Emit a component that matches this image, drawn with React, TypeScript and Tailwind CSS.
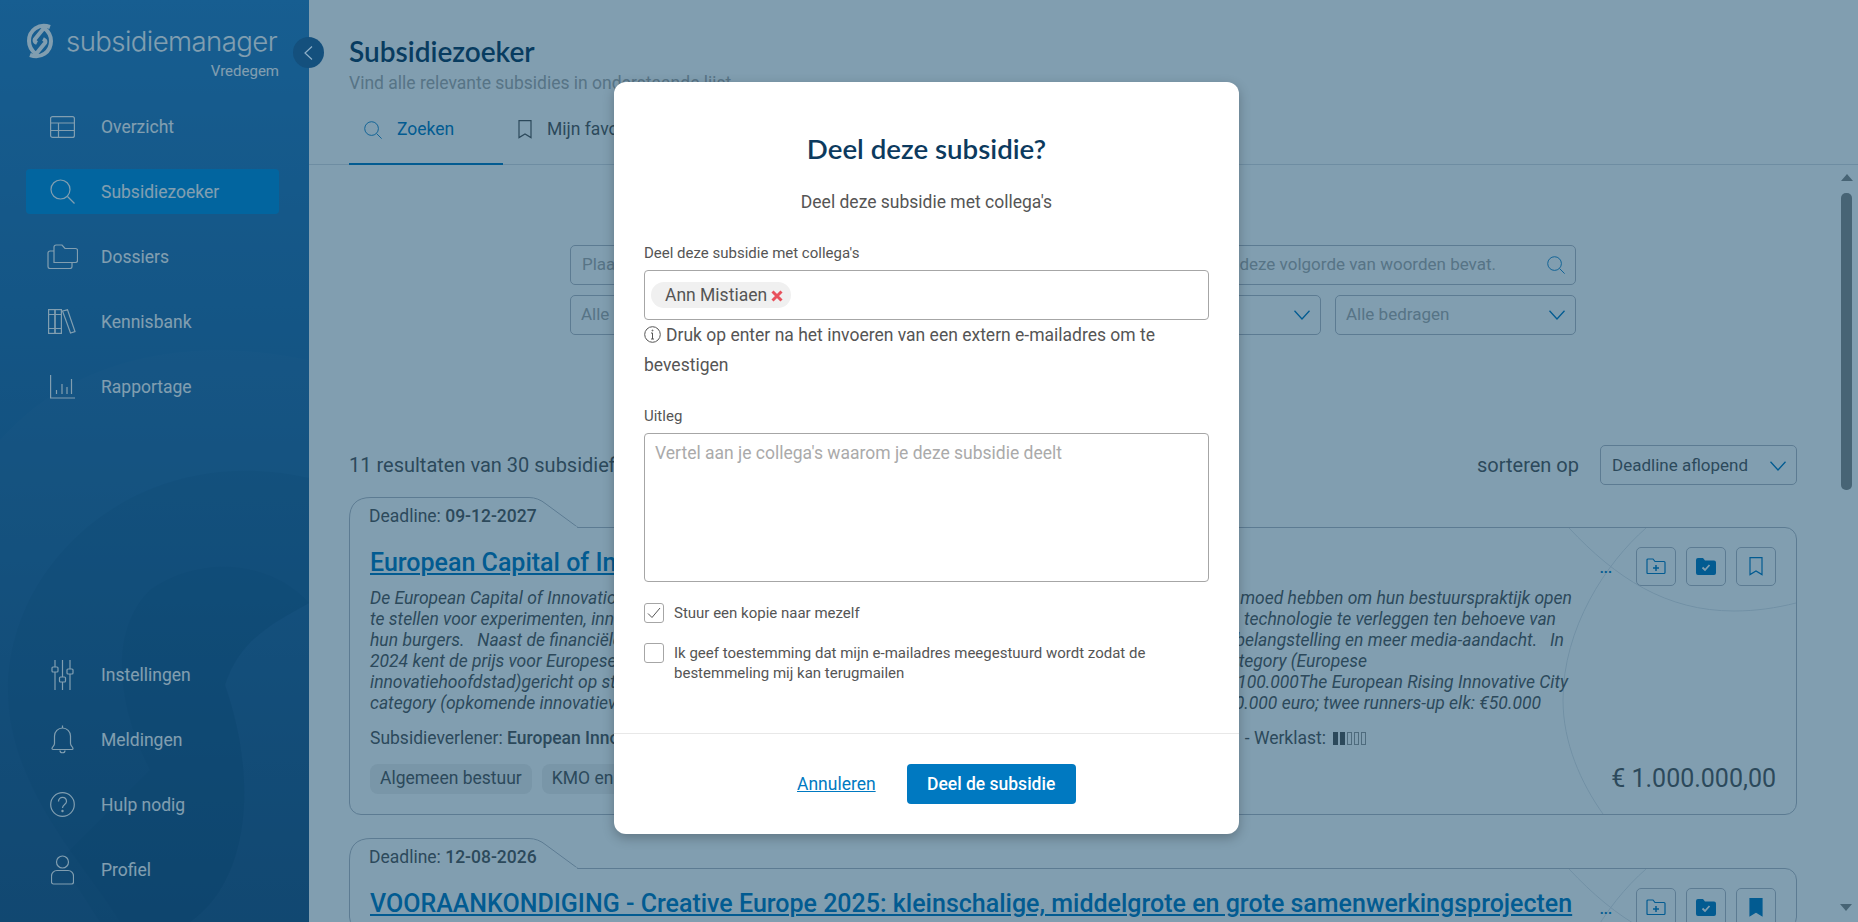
import React from 'react';

const Icon: React.FC<{ w: number; h: number; vb: string; className?: string; children: React.ReactNode }> = ({ w, h, vb, className, children }) => (
  <svg width={w} height={h} viewBox={vb} fill="none" stroke="currentColor" strokeWidth="1.2" className={className}>
    {children}
  </svg>
);

const SearchIcon: React.FC<{ size: number; className?: string }> = ({ size, className }) => (
  <Icon w={size} h={size} vb="0 0 25 25" className={className}>
    <circle cx="10.5" cy="10.5" r="9.5" />
    <path d="M17.5 17.5 24.5 24.5" />
  </Icon>
);

const Chevron: React.FC = () => (
  <svg width="16" height="10" viewBox="0 0 16 10" fill="none" stroke="#0079c1" strokeWidth="1.3"><path d="M.5 .8 8 9 15.5 .8" /></svg>
);

const navTop = [
  {
    label: 'Overzicht',
    icon: (
      <Icon w={25} h={22} vb="0 0 25 22">
        <rect x=".6" y=".6" width="23.8" height="20.8" rx="2" />
        <path d="M.6 7h23.8M.6 14.5h23.8M8.5 7v14.4" />
      </Icon>
    ),
  },
  { label: 'Subsidiezoeker', active: true, icon: <SearchIcon size={25} /> },
  {
    label: 'Dossiers',
    icon: (
      <Icon w={31} h={25} vb="0 0 31 25">
        <path d="M7 18.5V3a2 2 0 0 1 2-2h6l3 3.500h10.500a2 2 0 0 1 2 2V16.500a2 2 0 0 1-2 2Z" />
        <path d="M7 7H3a2 2 0 0 0-2 2v13.500a2 2 0 0 0 2 2h20a2 2 0 0 0 2-2v-4" />
      </Icon>
    ),
  },
  {
    label: 'Kennisbank',
    icon: (
      <Icon w={28} h={25} vb="0 0 28 25">
        <rect x=".6" y=".6" width="6.400" height="23.800" />
        <rect x="7" y=".6" width="6.400" height="23.800" />
        <path d="M.6 5.500h12.800M.6 19.500h12.800" />
        <path d="M14.500 2 19.500.8 27 22.500l-4.500 1.500Z" />
      </Icon>
    ),
  },
  {
    label: 'Rapportage',
    icon: (
      <Icon w={25} h={24} vb="0 0 25 24">
        <path d="M.6 0V23h24.400" />
        <path d="M6.500 19v-4M12 19V9M17 19v-7M21.500 19V4" />
      </Icon>
    ),
  },
];

const navBottom = [
  {
    label: 'Instellingen',
    icon: (
      <Icon w={23} h={30} vb="0 0 23 30">
        <path d="M4 0v7M4 12v18M11.500 0v17M11.500 22v8M19 0v9M19 14v16" />
        <rect x="1" y="7" width="6" height="5" rx="1" />
        <rect x="8.500" y="17" width="6" height="5" rx="1" />
        <rect x="16" y="9" width="6" height="5" rx="1" />
      </Icon>
    ),
  },
  {
    label: 'Meldingen',
    icon: (
      <Icon w={23} h={30} vb="0 0 23 30">
        <path d="M1 23.500c0-1.500 2.500-2.500 2.500-5V11a8 8 0 0 1 16 0v7.500c0 2.500 2.500 3.500 2.500 5 0 .5-.5 1-1 1H2c-.5 0-1-.5-1-1Z" />
        <path d="M11.500 3V.5M9 25.500c0 3 5 3 5 0" />
      </Icon>
    ),
  },
  {
    label: 'Hulp nodig',
    icon: (
      <Icon w={25} h={25} vb="0 0 25 25">
        <circle cx="12.500" cy="12.500" r="11.800" />
        <path d="M8.500 9.500c0-5.500 8-5.500 8 0 0 3-4 3-4 6.500" />
        <circle cx="12.500" cy="19" r=".6" />
      </Icon>
    ),
  },
  {
    label: 'Profiel',
    icon: (
      <Icon w={23} h={30} vb="0 0 23 30">
        <circle cx="11.500" cy="7" r="6" />
        <path d="M6 15.500h11a5.500 5.500 0 0 1 5.500 5.500v6a2 2 0 0 1-2 2H2.500a2 2 0 0 1-2-2v-6A5.500 5.500 0 0 1 6 15.500Z" />
      </Icon>
    ),
  },
];

const NavItem: React.FC<{ label: string; icon: React.ReactNode; active?: boolean }> = ({ label, icon, active }) => (
  <div className={`flex h-[45px] items-center rounded-[4px] ${active ? 'bg-[#008ddd]' : ''}`}>
    <div className="ml-[16px] flex w-[40px] justify-center text-white">{icon}</div>
    <span className="ml-[19px] pt-[1px] text-[17.5px] text-white">{label}</span>
  </div>
);

const descLines = [
  { w: 'w-[1202px]', l: 'De European Capital of Innovation Awards belonen steden die de', r: 'moed hebben om hun bestuurspraktijk open' },
  { w: 'w-[1186px]', l: 'te stellen voor experimenten, innovatie en de grenzen van', r: 'technologie te verleggen ten behoeve van' },
  { w: 'w-[1194px]', l: 'hun burgers.   Naast de financiële prijs krijgen de winnaars', r: 'belangstelling en meer media-aandacht.   In' },
  { w: 'w-[997px]', l: '2024 kent de prijs voor Europese steden twee categorieën', r: 'tegory (Europese' },
  { w: 'w-[1198px]', l: 'innovatiehoofdstad)gericht op steden met meer dan', r: '100.000The European Rising Innovative City' },
  { w: 'w-[1171px]', l: 'category (opkomende innovatieve steden) met minder inwoners', r: '0.000 euro; twee runners-up elk: €50.000' },
];

const FolderPlus = () => (
  <Icon w={20} h={17} vb="0 0 20 17" className="text-[#0079c1]">
    <path d="M1 15.500V2a1 1 0 0 1 1-1h5l2 2.500h9a1 1 0 0 1 1 1v10a1 1 0 0 1-1 1H2a1 1 0 0 1-1-1Z" />
    <path d="M10 7v6M7 10h6" strokeWidth="1.500" />
  </Icon>
);

const FolderCheck = () => (
  <svg width="20" height="17" viewBox="0 0 20 17">
    <path fill="#0079c1" d="M0 2a2 2 0 0 1 2-2h5l2 2.500h9a2 2 0 0 1 2 2V15a2 2 0 0 1-2 2H2a2 2 0 0 1-2-2Z" />
    <path fill="none" stroke="#fff" strokeWidth="1.800" d="m6.500 9.500 2.500 2.500 4.500-5" />
  </svg>
);

const Bookmark: React.FC<{ filled?: boolean }> = ({ filled }) => (
  <svg width="14" height="19" viewBox="0 0 14 19" fill={filled ? '#0079c1' : 'none'} stroke="#0079c1" strokeWidth="1.200">
    <path d="M1 .6h12v17L7 14l-6 3.600Z" />
  </svg>
);

const ActionButton: React.FC<{ children: React.ReactNode }> = ({ children }) => (
  <div className="flex h-[39px] w-[40px] items-center justify-center rounded-[5px] border border-[#b5b9c3]">{children}</div>
);

const Workload = () => (
  <div className="ml-[7px] flex items-center gap-[2px]">
    <div className="h-[13px] w-[5px] bg-[#555]" />
    <div className="h-[13px] w-[5px] bg-[#555]" />
    <div className="h-[13px] w-[5px] border border-[#999]" />
    <div className="h-[13px] w-[5px] border border-[#999]" />
    <div className="h-[13px] w-[5px] border border-[#999]" />
  </div>
);

const DeadlineTab: React.FC<{ date: string }> = ({ date }) => (
  <div className="relative z-10 -mb-px h-[31px] w-[230px] pl-[20px] pt-[7px] text-[17.5px] leading-[24px] text-[#555]">
    <svg width="230" height="31" viewBox="0 0 230 31" className="absolute left-0 top-0 -z-10">
      <path d="M.5 31V22Q.5 .5 22 .5H180Q189 .5 197 7L229 30.500" fill="#fff" stroke="#b5b9c3" />
      <path d="M1 30.500H228" stroke="#fff" strokeWidth="2" />
    </svg>
    Deadline: <span className="font-medium">{date}</span>
  </div>
);

const CardArt = () => (
  <svg width="240" height="286" viewBox="0 0 240 286" fill="none" stroke="#dfe3e8" className="absolute right-0 top-0">
    <path d="M90 0C50 35 7 100 7 172C7 215 25 255 47 286" />
    <path d="M13 0C60 50 110 83 178 83C200 83 220 80 240 75" />
  </svg>
);

const ResultCard: React.FC<{ date: string; title: string; saved?: boolean; children?: React.ReactNode }> = ({ date, title, saved, children }) => (
  <div>
    <DeadlineTab date={date} />
    <div className="relative overflow-hidden rounded-b-[12px] rounded-tr-[12px] border border-[#b5b9c3] px-[20px] pt-[19px]">
      <CardArt />
      <div className="relative flex h-[40px] items-start justify-between">
        <h3 className="whitespace-nowrap text-[25px] font-medium leading-[32px] text-[#0079c1] underline">{title}</h3>
        <div className="flex items-center">
          <span className="mr-[24px] mt-[2px] text-[14px] leading-none font-bold text-[#0079c1]">...</span>
          <div className="flex gap-[10px]">
            <ActionButton><FolderPlus /></ActionButton>
            <ActionButton><FolderCheck /></ActionButton>
            <ActionButton><Bookmark filled={saved} /></ActionButton>
          </div>
        </div>
      </div>
      {children}
    </div>
  </div>
);

const App: React.FC = () => {
  return (
    <div className="relative flex h-[922px] w-full overflow-hidden bg-white font-['Roboto',sans-serif]">
      {/* Sidebar */}
      <aside className="relative flex w-[309px] shrink-0 flex-col overflow-hidden bg-gradient-to-b from-[#2a7ec0] to-[#1b4f7f] pb-[30px] pl-[26px] pr-[30px]">
        <svg width="309" height="922" viewBox="0 0 309 922" className="absolute left-0 top-0">
          <path d="M0 440C60 370 170 330 309 360V922H0Z" fill="#ffffff" fillOpacity=".02" />
          <path d="M309 478C140 440 8 560 8 690C8 790 90 870 120 922H190C250 880 258 780 225 685C240 640 270 625 309 603Z" fill="#003a66" fillOpacity=".1" />
          <path d="M309 603C270 560 200 555 150 590C110 630 115 700 150 770L60 860L100 922H190C250 880 258 780 225 685C240 640 270 625 309 603Z" fill="#003a66" fillOpacity=".1" />
        </svg>
        <div className="relative h-[104px] pt-[23px]">
          <div className="flex items-center gap-[13px] pl-[1px] text-white">
            <svg width="26" height="36" viewBox="0 0 26 36" fill="none" stroke="#fff" strokeWidth="4">
              <path d="M23 4C12 0 2 7 2 18c0 6 3 10 7 13l9-11c1-2 0-3-2-4" />
              <path d="M3 32c11 4 21-3 21-14 0-6-3-10-7-13l-9 11c-1 2 0 3 2 4" />
            </svg>
            <span className="font-['Inter',sans-serif] text-[27.6px] font-light leading-[36px] tracking-[-0.6px] text-white">subsidiemanager</span>
          </div>
          <div className="mt-[2px] text-right text-[15px] leading-[20px] text-white">Vredegem</div>
        </div>
        <nav className="relative flex flex-col gap-[20px]">
          {navTop.map((item) => <NavItem key={item.label} {...item} />)}
        </nav>
        <nav className="relative mt-auto flex flex-col gap-[20px]">
          {navBottom.map((item) => <NavItem key={item.label} {...item} />)}
        </nav>
      </aside>

      {/* Main */}
      <main className="isolate min-w-0 flex-1">
        <header className="h-[165px] border-b border-[#d8dde2] px-[40px] pt-[33px]">
          <h1 className="font-['Lato',sans-serif] text-[28px] font-semibold leading-[36px] text-[#0c3a5e]">Subsidiezoeker</h1>
          <p className="mt-[1px] text-[17.5px] leading-[26px] text-[#aaa]">Vind alle relevante subsidies in onderstaande lijst.</p>
          <div className="flex">
            <div className="flex h-[69px] w-[154px] items-center gap-[15px] border-b-[2px] border-[#0079c1] pl-[15px] text-[17.5px] text-[#0079c1]">
              <SearchIcon size={18} />
              <span>Zoeken</span>
            </div>
            <div className="flex h-[69px] items-center gap-[15px] pb-[2px] pl-[15px] text-[17.5px] text-[#555]">
              <svg width="14" height="19" viewBox="0 0 14 19" fill="none" stroke="#555" strokeWidth="1.200"><path d="M1 .6h12v17L7 14l-6 3.600Z" /></svg>
              <span>Mijn favorieten</span>
            </div>
          </div>
        </header>

        <section className="ml-[261px] mr-[282px] mt-[80px] flex flex-col gap-[10px]">
          <div className="flex h-[40px] items-center justify-between rounded-[5px] border border-[#b5b9c3] pl-[11px] pr-[10px] text-[17px] text-[#aaa]">
            <span>Plaats woorden tussen aanhalingstekens</span>
            <div className="flex items-center gap-[51px]">
              <span>deze volgorde van woorden bevat.</span>
              <SearchIcon size={18} className="text-[#0079c1]" />
            </div>
          </div>
          <div className="grid grid-cols-4 gap-[14px]">
            {['Alle regio\'s', 'Alle thema\'s', 'Alle types', 'Alle bedragen'].map((label) => (
              <div key={label} className="flex h-[40px] items-center justify-between rounded-[5px] border border-[#b5b9c3] pl-[10px] pr-[10px] text-[17px] text-[#aaa]">
                <span>{label}</span>
                <Chevron />
              </div>
            ))}
          </div>
        </section>

        <div className="ml-[40px] mr-[61px]">
          <div className="mt-[110px] flex h-[40px] items-center justify-between">
            <span className="text-[20px] text-[#555]">11 resultaten van 30 subsidiefiches</span>
            <div className="flex items-center gap-[21px]">
              <span className="text-[20px] text-[#555]">sorteren op</span>
              <div className="flex h-[40px] w-[197px] items-center justify-between rounded-[5px] border border-[#b5b9c3] pl-[11px] pr-[10px] pt-[1px] text-[17px] text-[#555]">
                <span>Deadline aflopend</span>
                <Chevron />
              </div>
            </div>
          </div>

          <div className="mt-[12px] flex flex-col gap-[23px]">
            <ResultCard date="09-12-2027" title="European Capital of Innovation Awards 2024">
              <div className="relative mt-[1px] text-[17.5px] italic leading-[21px] text-[#555]">
                {descLines.map((line) => (
                  <div key={line.r} className={`flex justify-between whitespace-pre ${line.w}`}>
                    <span>{line.l}</span>
                    <span>{line.r}</span>
                  </div>
                ))}
              </div>
              <div className="relative mt-[12px] flex h-[24px] w-[996px] items-center justify-between text-[17.5px] text-[#555]">
                <span>Subsidieverlener: <span className="font-medium">European Innovation Council</span></span>
                <div className="flex items-center">
                  <span>- Werklast:</span>
                  <Workload />
                </div>
              </div>
              <div className="relative mt-[13px] flex items-center justify-between pb-[20px]">
                <div className="flex gap-[10px]">
                  <span className="flex h-[30px] items-center rounded-[8px] bg-[#eeeeee] px-[10px] text-[17.5px] text-[#555]">Algemeen bestuur</span>
                  <span className="flex h-[30px] items-center rounded-[8px] bg-[#eeeeee] px-[10px] text-[17.5px] text-[#555]">KMO en ondernemers</span>
                </div>
                <span className="pt-[1px] text-[25px] leading-[30px] text-[#555]">€ 1.000.000,00</span>
              </div>
            </ResultCard>
            <ResultCard date="12-08-2026" title="VOORAANKONDIGING - Creative Europe 2025: kleinschalige, middelgrote en grote samenwerkingsprojecten" saved />
          </div>
        </div>
      </main>

      {/* Scrollbar */}
      <div className="absolute right-[6px] top-[174px] flex w-[11px] flex-col items-center">
        <div className="h-0 w-0 border-x-[6px] border-b-[7px] border-x-transparent border-b-[#8a8b89]" />
        <div className="mt-[12px] h-[297px] w-[11px] rounded-[5px] bg-[#8a8b89]" />
      </div>
      <div className="absolute right-[6px] top-[904px] h-0 w-0 border-x-[6px] border-t-[7px] border-x-transparent border-t-[#8a8b89]" />

      {/* Overlay */}
      <div className="absolute inset-0 bg-[#033d61]/50" />

      {/* Sidebar toggle */}
      <div className="absolute left-[293px] top-[37px] flex h-[31px] w-[31px] items-center justify-center rounded-full bg-[#14507d]">
        <svg width="9" height="14" viewBox="0 0 9 14" fill="none" stroke="#8fb0c8" strokeWidth="1.200"><path d="M8 .5 1 7l7 6.500" /></svg>
      </div>

      {/* Modal */}
      <div className="absolute left-[614px] top-[82px] h-[752px] w-[625px] rounded-[12px] bg-white shadow-[0_4px_12px_rgba(0,0,0,0.25)]">
        <div className="px-[30px] pt-[49px]">
          <h2 className="text-center font-['Lato',sans-serif] text-[27.7px] font-semibold leading-[36px] text-[#0c3a5e]">Deel deze subsidie?</h2>
          <p className="mt-[22px] text-center text-[17.5px] leading-[26px] text-[#555]">Deel deze subsidie met collega's</p>
          <label className="mt-[28px] block text-[15px] leading-[20px] text-[#555]">Deel deze subsidie met collega's</label>
          <div className="mt-[7px] flex h-[50px] items-center rounded-[4px] border border-[#a6a6a6] pl-[6px]">
            <div className="flex h-[26px] items-center gap-[4px] rounded-full bg-[#f0f0f0] pl-[14px] pr-[8px] text-[17.5px] text-[#555]">
              Ann Mistiaen
              <svg width="12" height="12" viewBox="0 0 12 12" stroke="#e8505b" strokeWidth="3" className="mt-[2px]"><path d="M1.500 1.500 10.500 10.500M10.500 1.500 1.500 10.500" /></svg>
            </div>
          </div>
          <p className="text-[17.5px] leading-[30px] text-[#555]">
            <svg width="17" height="17" viewBox="0 0 17 17" fill="none" stroke="#555" className="mr-[5px] inline-block align-[-2px]">
              <circle cx="8.500" cy="8.500" r="7.800" />
              <path d="M8.500 7v6M7 13h3M7 7h1.500" />
              <circle cx="8.500" cy="4.500" r=".5" />
            </svg>
            Druk op enter na het invoeren van een extern e-mailadres om te bevestigen
          </p>
          <label className="mt-[26px] block text-[15px] leading-[20px] text-[#555]">Uitleg</label>
          <div className="mt-[7px] h-[149px] rounded-[4px] border border-[#a6a6a6] px-[10px] pt-[6px] text-[17.5px] leading-[26px] text-[#aaa]">
            Vertel aan je collega's waarom je deze subsidie deelt
          </div>
          <div className="mt-[21px] flex items-center gap-[10px] text-[15px] leading-[20px] text-[#555]">
            <div className="flex h-[20px] w-[20px] items-center justify-center rounded-[3px] border border-[#a6a6a6]">
              <svg width="14" height="12" viewBox="0 0 14 12" fill="none" stroke="#555"><path d="m1 6.500 4 4L13 1" /></svg>
            </div>
            Stuur een kopie naar mezelf
          </div>
          <div className="mt-[20px] flex items-start gap-[10px] text-[15px] leading-[20px] text-[#555]">
            <div className="h-[20px] w-[20px] shrink-0 rounded-[3px] border border-[#a6a6a6]" />
            <span>Ik geef toestemming dat mijn e-mailadres meegestuurd wordt zodat de bestemmeling mij kan terugmailen</span>
          </div>
        </div>
        <div className="mt-[50px] flex items-center border-t border-[#e8e8e8] pl-[183px] pt-[30px]">
          <a className="text-[17.5px] text-[#0079c1] underline">Annuleren</a>
          <button className="ml-[31px] h-[40px] w-[169px] rounded-[4px] bg-[#0079c1] text-[17.5px] font-medium text-white">Deel de subsidie</button>
        </div>
      </div>
    </div>
  );
};

export default App;
